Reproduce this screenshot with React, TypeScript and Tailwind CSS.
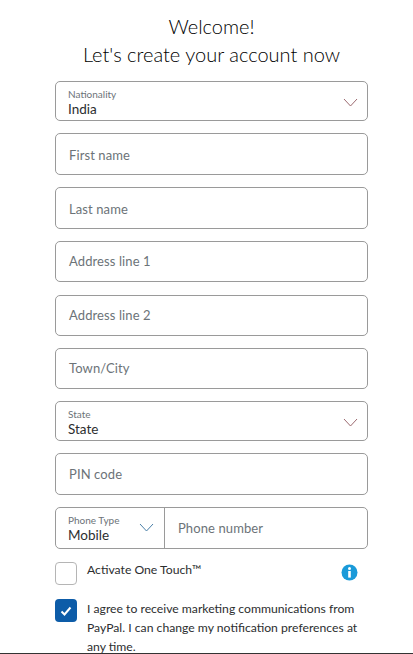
const font = "font-['Lato',sans-serif]";

const Select = ({ label, value }: { label: string; value: string }) => (
  <div className="relative h-[40px] rounded-[5px] border border-[#9a9a9a] pl-[12px] pt-[6px]">
    <div className="text-[10px] leading-[12px] text-[#6c7378]">{label}</div>
    <div className="text-[13.5px] leading-[18px] text-[#2c2e2f]">{value}</div>
    <svg className="absolute right-[9px] top-[16px]" width="15" height="9" viewBox="0 0 15 9" fill="none">
      <path d="M1 1l6.5 7L14 1" stroke="#9c6a70" strokeWidth="1" />
    </svg>
  </div>
);

const Field = ({ label, className }: { label: string; className: string }) => (
  <div className={`flex items-center rounded-[5px] border border-[#9a9a9a] pl-[13px] text-[13px] tracking-[0.1px] text-[#6c7378] ${className}`}>
    {label}
  </div>
);

export default function App() {
  return (
    <div className={`relative h-[654px] w-[413px] overflow-hidden bg-white ${font}`}>
      <div className="pl-[55px] pr-[45px] pt-[12px]">
        <h1 className="whitespace-nowrap text-center text-[20px] font-light leading-[28px] text-black">Welcome!</h1>
        <h2 className="whitespace-nowrap text-center text-[20px] font-light leading-[28px] text-black">Let's create your account now</h2>

        <div className="mt-[13px] flex flex-col gap-[12px]">
          <Select label="Nationality" value="India" />
          <Field label="First name" className="h-[42px] pt-[4px]" />
          <Field label="Last name" className="h-[42px] pt-[4px]" />
          <Field label="Address line 1" className="h-[41px]" />
          <div className="mt-[1px]">
            <Field label="Address line 2" className="h-[41px]" />
          </div>
          <Field label="Town/City" className="h-[41px]" />
          <Select label="State" value="State" />
          <Field label="PIN code" className="h-[42px] pt-[2px]" />
          <div className="flex h-[42px] rounded-[5px] border border-[#9a9a9a]">
            <div className="relative w-[109px] border-r border-[#9a9a9a] pl-[12px] pt-[6px]">
              <div className="text-[10px] leading-[12px] text-[#6c7378]">Phone Type</div>
              <div className="text-[13.5px] leading-[18px] text-[#2c2e2f]">Mobile</div>
              <svg className="absolute right-[10px] top-[15px]" width="15" height="9" viewBox="0 0 15 9" fill="none">
                <path d="M1 1l6.5 7L14 1" stroke="#4a7fa8" strokeWidth="1" />
              </svg>
            </div>
            <div className="flex items-center pl-[13px] pt-[2px] text-[13px] tracking-[0.1px] text-[#6c7378]">Phone number</div>
          </div>
        </div>

        <div className="mt-[13px] flex items-start">
          <div className="h-[23px] w-[22px] rounded-[4px] border border-[#b5b5b5]" />
          <div className="ml-[10px] flex-1 text-[12.2px] leading-[16px] text-[#2c2e2f]">Activate One Touch™</div>
          <svg className="mr-[10px] mt-[2px]" width="17" height="17" viewBox="0 0 17 17">
            <circle cx="8.5" cy="8.5" r="8" fill="#1a9ad9" />
            <circle cx="8.5" cy="4.6" r="1.5" fill="#fff" />
            <rect x="7.2" y="7" width="2.6" height="6.6" fill="#fff" />
          </svg>
        </div>

        <div className="mt-[14px] flex items-start">
          <div className="flex h-[23px] w-[22px] shrink-0 items-center justify-center rounded-[4px] bg-[#0d5ca8]">
            <svg width="12" height="10" viewBox="0 0 12 10" fill="none">
              <path d="M1.5 5.5l3 3L10.5 1.5" stroke="#fff" strokeWidth="2" />
            </svg>
          </div>
          <div className="ml-[10px] whitespace-nowrap text-[12.2px] leading-[19px] text-[#2c2e2f]">
            I agree to receive marketing communications from
            <br />
            PayPal. I can change my notification preferences at
            <br />
            any time.
          </div>
        </div>
      </div>
      <div className="absolute bottom-0 left-0 h-px w-full bg-[#333]" />
    </div>
  );
}
